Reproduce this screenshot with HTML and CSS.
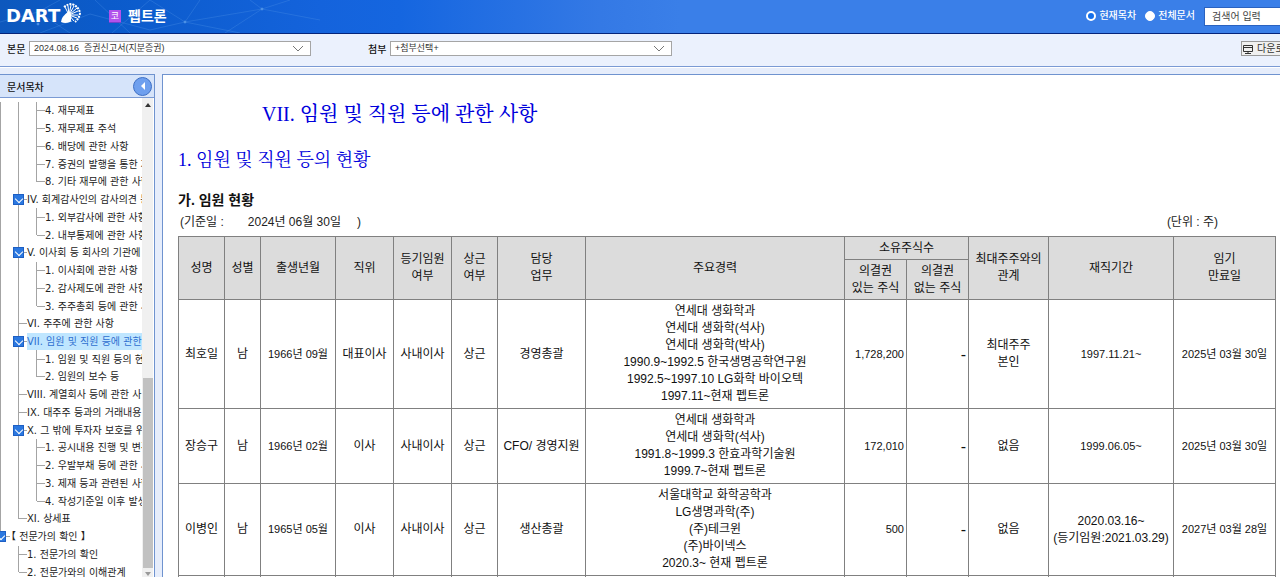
FILE: index.html
```html
<!DOCTYPE html>
<html lang="ko">
<head>
<meta charset="utf-8">
<title>펩트론 - DART</title>
<link rel="stylesheet" href="styles.css">
</head>
<body>
<header class="top">
  <svg class="mesh" width="320" height="33" viewBox="0 0 320 33" aria-hidden="true">
    <path d="M0 22L38 12L70 33M38 12L60 0M95 0L130 33M112 33L150 0M150 0L185 22L240 33M185 22L262 9L320 20M262 9L250 0M262 9L290 0M262 9L225 33M40 33L90 14L150 30L185 22M200 0L185 22"/>
    <circle cx="262" cy="9" r="1"/><circle cx="38" cy="24" r="1"/><circle cx="185" cy="22" r="1"/>
  </svg>
  <div class="top-row">
    <div class="logo">DART<svg class="shell" width="21" height="21" viewBox="0 0 21 21" aria-hidden="true">
      <path class="ray" d="M9 12L5 4M9 12L8 3M9 12L11 2M9 12L14 3M9 12L17 5M9 12L18 8M9 12L18 12M9 12L17 15M9 12L14 18M9 12L11 19"/>
      <path class="rim" d="M4 4Q8 1 12 1Q19 4 20 10Q19 16 15 19"/>
      <path class="fan" d="M1 19Q1 14 9 8Q13 14 10 19Q5 21 1 19Z"/>
    </svg></div>
    <span class="badge">코</span>
    <h1 class="company">펩트론</h1>
    <form class="search">
      <label class="scope"><input type="radio" name="scope" checked>현재목차</label>
      <label class="scope"><input type="radio" name="scope">전체문서</label>
      <input class="query" type="text" placeholder="검색어 입력" aria-label="검색어">
    </form>
  </div>
</header>
<div class="toolbar">
  <label for="doc">본문</label>
  <span class="pick"><select id="doc"><option>2024.08.16 &nbsp;증권신고서(지분증권)</option></select><svg width="12" height="7" viewBox="0 0 12 7" aria-hidden="true"><path d="M1 1L6 6L11 1"/></svg></span>
  <label class="second" for="att">첨부</label>
  <span class="pick"><select id="att"><option>+첨부선택+</option></select><svg width="12" height="7" viewBox="0 0 12 7" aria-hidden="true"><path d="M1 1L6 6L11 1"/></svg></span>
  <button class="download" type="button"><svg width="10" height="10" viewBox="0 0 10 10" aria-hidden="true"><path d="M.5 1.5H9.5V7.5H.5ZM.5 3.5H9.5M5 7.5V9.5M2 9.5H8"/></svg>다운로드</button>
</div>
<div class="work">
  <nav class="side">
    <div class="side-head"><h2>문서목차</h2><button type="button" aria-label="목차 닫기"><svg width="6" height="8" viewBox="0 0 6 8" aria-hidden="true"><path d="M5 0L1 4L5 8Z"/></svg></button></div>
    <div class="side-body">
      <ul class="tree">
        <li class="l3"><a href="#">4. 재무제표</a></li>
        <li class="l3"><a href="#">5. 재무제표 주석</a></li>
        <li class="l3"><a href="#">6. 배당에 관한 사항</a></li>
        <li class="l3"><a href="#">7. 증권의 발행을 통한 자</a></li>
        <li class="l3 end"><a href="#">8. 기타 재무에 관한 사항</a></li>
        <li class="l2 open"><i></i><a href="#">IV. 회계감사인의 감사의견 등</a></li>
        <li class="l3"><a href="#">1. 외부감사에 관한 사항</a></li>
        <li class="l3 end"><a href="#">2. 내부통제에 관한 사항</a></li>
        <li class="l2 open"><i></i><a href="#">V. 이사회 등 회사의 기관에 관</a></li>
        <li class="l3"><a href="#">1. 이사회에 관한 사항</a></li>
        <li class="l3"><a href="#">2. 감사제도에 관한 사항</a></li>
        <li class="l3 end"><a href="#">3. 주주총회 등에 관한 사</a></li>
        <li class="l2"><a href="#">VI. 주주에 관한 사항</a></li>
        <li class="l2 open on"><i></i><a href="#">VII. 임원 및 직원 등에 관한</a></li>
        <li class="l3"><a href="#">1. 임원 및 직원 등의 현</a></li>
        <li class="l3 end"><a href="#">2. 임원의 보수 등</a></li>
        <li class="l2"><a href="#">VIII. 계열회사 등에 관한 사</a></li>
        <li class="l2"><a href="#">IX. 대주주 등과의 거래내용</a></li>
        <li class="l2 open"><i></i><a href="#">X. 그 밖에 투자자 보호를 위</a></li>
        <li class="l3"><a href="#">1. 공시내용 진행 및 변경</a></li>
        <li class="l3"><a href="#">2. 우발부채 등에 관한 사</a></li>
        <li class="l3"><a href="#">3. 제재 등과 관련된 사항</a></li>
        <li class="l3 end"><a href="#">4. 작성기준일 이후 발생</a></li>
        <li class="l2 end"><a href="#">XI. 상세표</a></li>
        <li class="l1"><i></i><a href="#">【 전문가의 확인 】</a></li>
        <li class="l2 tail"><a href="#">1. 전문가의 확인</a></li>
        <li class="l2 tail end"><a href="#">2. 전문가와의 이해관계</a></li>
      </ul>
      <div class="scroll" aria-hidden="true">
        <svg width="6" height="4" viewBox="0 0 6 4"><path class="up" d="M0 4L3 0L6 4Z"/></svg>
        <span class="thumb"></span>
        <svg width="6" height="4" viewBox="0 0 6 4"><path class="down" d="M0 0L3 4L6 0Z"/></svg>
      </div>
    </div>
  </nav>
  <main class="doc">
    <h2 class="title">VII. 임원 및 직원 등에 관한 사항</h2>
    <h3 class="section">1. 임원 및 직원 등의 현황</h3>
    <h4 class="sub">가. 임원 현황</h4>
    <div class="meta"><span class="base"><span>(기준일 :</span><span class="date">2024년 06월 30일</span><span>)</span></span><span>(단위 : 주)</span></div>
    <table class="people">
      <colgroup><col class="c-name"><col class="c-sex"><col class="c-birth"><col class="c-pos"><col class="c-pos"><col class="c-name"><col class="c-duty"><col><col class="c-share"><col class="c-share"><col class="c-rel"><col class="c-term"><col class="c-end"></colgroup>
      <thead>
        <tr class="h1"><th rowspan="2">성명</th><th rowspan="2">성별</th><th rowspan="2">출생년월</th><th rowspan="2">직위</th><th rowspan="2">등기임원<br>여부</th><th rowspan="2">상근<br>여부</th><th rowspan="2">담당<br>업무</th><th rowspan="2">주요경력</th><th colspan="2">소유주식수</th><th rowspan="2">최대주주와의<br>관계</th><th rowspan="2">재직기간</th><th rowspan="2">임기<br>만료일</th></tr>
        <tr class="h2"><th>의결권<br>있는 주식</th><th>의결권<br>없는 주식</th></tr>
      </thead>
      <tbody>
        <tr><td>최호일</td><td>남</td><td class="date">1966년 09월</td><td>대표이사</td><td>사내이사</td><td>상근</td><td>경영총괄</td><td>연세대 생화학과<br>연세대 생화학(석사)<br>연세대 생화학(박사)<br>1990.9~1992.5 한국생명공학연구원<br>1992.5~1997.10 LG화학 바이오텍<br>1997.11~현재 펩트론</td><td class="num">1,728,200</td><td class="none">-</td><td>최대주주<br>본인</td><td class="date">1997.11.21~</td><td class="date">2025년 03월 30일</td></tr>
        <tr><td>장승구</td><td>남</td><td class="date">1966년 02월</td><td>이사</td><td>사내이사</td><td>상근</td><td>CFO/ 경영지원</td><td>연세대 생화학과<br>연세대 생화학(석사)<br>1991.8~1999.3 한효과학기술원<br>1999.7~현재 펩트론</td><td class="num">172,010</td><td class="none">-</td><td>없음</td><td class="date">1999.06.05~</td><td class="date">2025년 03월 30일</td></tr>
        <tr><td>이병인</td><td>남</td><td class="date">1965년 05월</td><td>이사</td><td>사내이사</td><td>상근</td><td>생산총괄</td><td>서울대학교 화학공학과<br>LG생명과학(주)<br>(주)테크윈<br>(주)바이넥스<br>2020.3~ 현재 펩트론</td><td class="num">500</td><td class="none">-</td><td>없음</td><td>2020.03.16~<br>(등기임원:2021.03.29)</td><td class="date">2027년 03월 28일</td></tr>
        <tr><td></td><td></td><td></td><td></td><td></td><td></td><td></td><td></td><td></td><td></td><td></td><td></td><td></td></tr>
      </tbody>
    </table>
  </main>
</div>
</body>
</html>
```
FILE: styles.css
```css
* { box-sizing: border-box; }

body {
  margin: 0;
  height: 100vh;
  overflow: hidden;
  display: flex;
  flex-direction: column;
  background: #eaf0fc;
  color: #222;
  font-family: "Liberation Sans", "Noto Sans CJK KR", sans-serif;
  font-size: 12px;
}

h1, h2, h3, h4, ul { margin: 0; padding: 0; }

/* top banner */
.top {
  position: relative;
  flex: none;
  height: 34px;
  overflow: hidden;
  border-bottom: 1px solid #04247a;
  background: linear-gradient(90deg, #0d58bd 0, #0b5bcb 110px, #1463dc 320px, #1566e0 400px, #3479e5 600px, #3a7fe8 680px);
}
.mesh { position: absolute; left: 0; top: 0; fill: #5ea0ee; stroke: #4a90e6; stroke-width: 1; }
.mesh path { fill: none; opacity: 0.35; }
.top-row {
  position: relative;
  display: flex;
  align-items: center;
  height: 32px;
  padding-left: 6px;
  width: calc(100% + 70px);
}
.logo {
  display: flex;
  align-items: center;
  width: 103px;
  color: #fff;
  font: bold 18px/20px "DejaVu Sans", sans-serif;
}
.shell { flex: none; margin: -6px 0 0; fill: none; stroke: #fff; }
.ray { stroke-width: 1; }
.rim { stroke-width: 2; stroke-dasharray: 2 1; }
.fan { fill: #fff; stroke: none; }
.badge {
  width: 12px;
  height: 13px;
  background: #b152ec;
  border-bottom: 1px solid #7440c8;
  color: #fff;
  font-size: 9px;
  line-height: 12px;
  text-align: center;
}
.company { margin-left: 7px; color: #fff; font-size: 14px; line-height: 20px; }
.search { display: flex; align-items: center; margin-left: auto; }
.scope { display: flex; align-items: center; gap: 3px; margin-right: 9px; color: #fff; font-size: 10px; line-height: 14px; font-weight: 500; }
.scope input {
  appearance: none;
  width: 10px;
  height: 10px;
  margin: 0;
  border: 1px solid #fff;
  border-radius: 50%;
  background: #fff;
}
.scope input:checked { border-width: 2px; background: #1670ea; }
.query {
  width: 146px;
  height: 19px;
  padding: 0 7px;
  border: 1px solid #2a62c0;
  background: #fff;
  font: 10px/16px "Liberation Sans", "Noto Sans CJK KR", sans-serif;
}
.query::placeholder { color: #444; }

/* document selectors */
.toolbar {
  flex: none;
  display: flex;
  align-items: center;
  height: 33px;
  width: calc(100% + 30px);
  padding: 0 0 3px 7px;
  border-bottom: 1px solid #7a9ad4;
  background: #ebf1fd;
  font-size: 10px;
}
.toolbar label { width: 22px; color: #111; font-weight: 500; white-space: nowrap; }
.toolbar .second { margin-left: 57px; }
.pick { position: relative; width: 282px; }
.pick select {
  display: block;
  appearance: none;
  width: 100%;
  height: 15px;
  padding: 0 4px;
  border: 1px solid #a5a5a5;
  border-radius: 0;
  background: #fff;
  color: #333;
  font: 9px/13px "Liberation Sans", "Noto Sans CJK KR", sans-serif;
}
.pick svg { position: absolute; right: 7px; top: 4px; fill: none; stroke: #777; pointer-events: none; }
.download {
  display: flex;
  align-items: center;
  gap: 4px;
  width: 69px;
  height: 15px;
  margin-left: auto;
  padding: 0 1px;
  border: 1px solid #999;
  background: #f0f0f0;
  color: #333;
  font: 10px/13px "Liberation Sans", "Noto Sans CJK KR", sans-serif;
  white-space: nowrap;
}
.download svg { flex: none; fill: none; stroke: #333; }

.work {
  flex: 1;
  display: flex;
  gap: 7px;
  min-height: 0;
  padding-top: 6px;
  border-top: 1px solid #fff;
  background: #e6edfb;
}

/* contents tree */
.side {
  flex: none;
  display: flex;
  flex-direction: column;
  width: 155px;
  border: 1px solid #6f93cf;
  border-width: 1px 1px 0 0;
  background: #fff;
}
.side-head {
  flex: none;
  display: flex;
  align-items: center;
  justify-content: space-between;
  height: 23px;
  padding: 0 2px 0 7px;
  border-bottom: 1px solid #7a9ad4;
  background: #d6e4fa;
}
.side-head h2 { font-size: 10px; font-weight: 500; color: #111; }
.side-head button {
  display: flex;
  align-items: center;
  justify-content: center;
  width: 19px;
  height: 19px;
  padding: 0;
  border: 1px solid #3e6fc4;
  border-radius: 50%;
  background: #6e9fee;
}
.side-head svg { fill: #fff; }
.side-body { flex: 1; display: flex; min-height: 0; overflow: hidden; padding-right: 1px; }
.tree {
  flex: 1;
  min-width: 0;
  display: grid;
  grid-template-rows: repeat(27, 1fr);
  height: 100%;
  margin-top: 4px;
  overflow: hidden;
  list-style: none;
  font: 10px/17px "DejaVu Sans", "Noto Sans CJK KR", sans-serif;
}
.tree li {
  --dot: #a4a4a4;
  --root: var(--dot);
  --root-h: 100%;
  --mid-h: 100%;
  --mid-x: 18px;
  --leaf: transparent;
  --leaf-h: 100%;
  --arm-x: 37px;
  display: flex;
  align-items: center;
  min-height: 0;
  min-width: 0;
  overflow: hidden;
  background:
    linear-gradient(var(--root), var(--root)) 0 0 / 1px var(--root-h) no-repeat,
    linear-gradient(var(--dot), var(--dot)) var(--mid-x) 0 / 1px var(--mid-h) no-repeat,
    linear-gradient(var(--leaf), var(--leaf)) 36px 0 / 1px var(--leaf-h) no-repeat,
    linear-gradient(var(--dot), var(--dot)) var(--arm-x) 50% / 8px 1px no-repeat;
}
.tree a { flex: none; color: #222; text-decoration: none; white-space: nowrap; }
.tree .l3 { --leaf: var(--dot); padding-left: 45px; }
.tree .l3.end { --leaf-h: 50%; }
.tree .l2 { --arm-x: 19px; padding-left: 27px; }
.tree .l2.end { --mid-h: 50%; }
.tree .tail { --root: transparent; }
.tree .open { padding-left: 13px; }
.tree .l1 { --root-h: 50%; --mid-h: 0; --arm-x: 2px; padding-left: 0; }
.tree i {
  flex: none;
  display: flex;
  justify-content: center;
  width: 11px;
  height: 11px;
  margin-right: 3px;
  background: #2b78e0;
  border: 1px solid #1d5fc4;
}
.tree i::after {
  content: "";
  width: 5px;
  height: 5px;
  margin-top: 1px;
  border: solid #fff;
  border-width: 0 1px 1px 0;
  rotate: 45deg;
}
.tree .l1 i { margin-left: -5px; margin-right: 0; }
.tree .on a { flex: 1; background: #bfe6ff; color: #2e6fd0; }
.scroll {
  flex: none;
  display: flex;
  flex-direction: column;
  align-items: center;
  width: 11px;
  padding: 5px 0 1px;
  background: #f0f0f0;
}
.scroll svg { flex: none; }
.up { fill: #333; }
.down { fill: #999; }
.thumb { width: 10px; height: 190px; margin: auto 0 4px; background: #c1c1c1; }

/* report page */
.doc {
  flex: 1;
  min-width: 0;
  overflow: hidden;
  padding: 24px 4px 0 15px;
  border: 1px solid #6f93cf;
  border-width: 1px 0 0 1px;
  background: #fff;
}
.title, .section {
  color: #0000dc;
  font-family: "Liberation Serif", "Noto Serif CJK KR", "Noto Sans CJK KR", serif;
}
.title { padding-left: 84px; font-size: 20px; line-height: 30px; font-weight: 500; }
.section { margin-top: 18px; font-size: 18px; line-height: 26px; font-weight: 400; }
.sub { margin-top: 17px; font-size: 14px; line-height: 20px; color: #111; }
.meta { display: flex; justify-content: space-between; padding: 3px 58px 5px 2px; line-height: 18px; }
.base { display: flex; }
.base .date { margin: 0 16px 0 24px; }
.people {
  width: 100%;
  table-layout: fixed;
  border-collapse: collapse;
  border: 1px solid #222;
  color: #111;
  line-height: 17px;
}
.people th, .people td {
  padding: 3px 2px;
  border: 1px solid #808080;
  text-align: center;
  font-weight: 400;
  white-space: nowrap;
}
.people th { padding: 2px; background: #dcdcdc; }
.h1 { height: 23px; }
.h2 { height: 40px; }
.people .date { font-size: 11px; }
.people .num { font-size: 11px; text-align: right; }
.people .none { font-size: 16px; text-align: right; }
.c-name { width: 46px; }
.c-sex { width: 36px; }
.c-birth { width: 75px; }
.c-pos { width: 58px; }
.c-duty { width: 88px; }
.c-share { width: 62px; }
.c-rel { width: 80px; }
.c-term { width: 125px; }
.c-end { width: 102px; }
```
